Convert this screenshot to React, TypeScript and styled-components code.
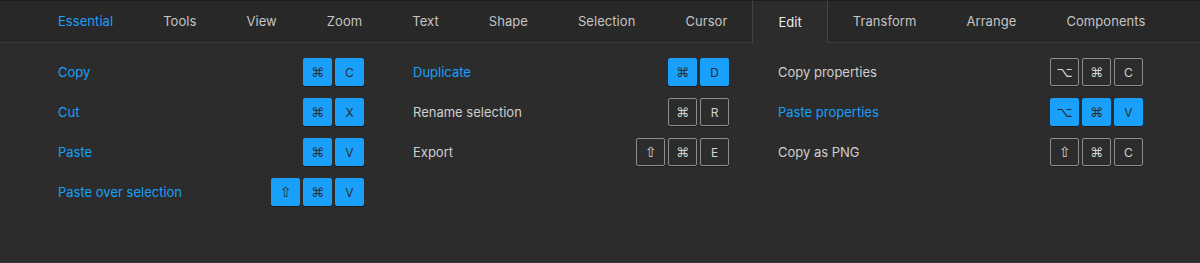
import React from "react";
import styled, { createGlobalStyle } from "styled-components";

const Global = createGlobalStyle`
  html, body { margin: 0; padding: 0; background: #2c2c2c; }
  body { font-family: Inter, "Noto Sans", sans-serif; -webkit-font-smoothing: antialiased; }
`;

const Page = styled.div`
  width: 1200px;
  height: 263px;
  box-sizing: border-box;
  background: #2c2c2c;
  border-top: 1px solid #1f1f1f;
  border-bottom: 1px solid #3a3a3a;
  display: flex;
  flex-direction: column;
`;

const TabBar = styled.div`
  height: 42px;
  box-sizing: border-box;
  display: flex;
  align-items: stretch;
  padding-left: 33px;
  background: #282828;
  border-bottom: 1px solid #3b3b3b;
`;

const Tab = styled.div<{ $active?: boolean; $first?: boolean }>`
  display: flex;
  align-items: center;
  padding: 0 ${(p) => (p.$active ? "25px" : "24px")} 1px;
  font-size: 13px;
  letter-spacing: 0.06px;
  color: ${(p) => (p.$first ? "#18a0fb" : p.$active ? "#ececec" : "#c4c4c4")};
  border-left: 1px solid ${(p) => (p.$active ? "#444" : "transparent")};
  border-right: 1px solid ${(p) => (p.$active ? "#444" : "transparent")};
  background: ${(p) => (p.$active ? "#2c2c2c" : "transparent")};
  margin-bottom: ${(p) => (p.$active ? "-1px" : "0")};
`;

const Content = styled.div`
  display: flex;
  gap: 49px;
  padding: 9px 0 0 58px;
`;

const Column = styled.div<{ $w: number }>`
  width: ${(p) => p.$w}px;
  display: flex;
  flex-direction: column;
`;

const Row = styled.div`
  height: 40px;
  display: flex;
  align-items: center;
  justify-content: space-between;
`;

const Label = styled.span<{ $blue?: boolean }>`
  font-size: 13px;
  color: ${(p) => (p.$blue ? "#18a0fb" : "#cfcfcf")};
`;

const Keys = styled.div`
  display: flex;
  gap: 3px;
`;

const Key = styled.span<{ $blue?: boolean }>`
  width: 29px;
  height: 28px;
  box-sizing: border-box;
  display: flex;
  align-items: center;
  justify-content: center;
  border-radius: 2px;
  font-size: 12px;
  font-family: Inter, "DejaVu Sans", sans-serif;
  color: ${(p) => (p.$blue ? "#2c2c2c" : "#d4d4d4")};
  background: ${(p) => (p.$blue ? "#18a0fb" : "transparent")};
  border: 1px solid ${(p) => (p.$blue ? "#18a0fb" : "#8c8c8c")};
  box-shadow: 0 1px 0 #1e1e1e;
`;

const Sym = styled.span<{ $size: number }>`
  font-family: "DejaVu Sans", sans-serif;
  font-size: ${(p) => p.$size}px;
  line-height: 1;
`;

const symSize: Record<string, number> = { "⌘": 13, "⇧": 14, "⌥": 14 };

type Item = { label: string; blue?: boolean; keys: string[] };

const cols: { w: number; items: Item[] }[] = [
  {
    w: 306,
    items: [
      { label: "Copy", blue: true, keys: ["⌘", "C"] },
      { label: "Cut", blue: true, keys: ["⌘", "X"] },
      { label: "Paste", blue: true, keys: ["⌘", "V"] },
      { label: "Paste over selection", blue: true, keys: ["⇧", "⌘", "V"] },
    ],
  },
  {
    w: 316,
    items: [
      { label: "Duplicate", blue: true, keys: ["⌘", "D"] },
      { label: "Rename selection", keys: ["⌘", "R"] },
      { label: "Export", keys: ["⇧", "⌘", "E"] },
    ],
  },
  {
    w: 365,
    items: [
      { label: "Copy properties", keys: ["⌥", "⌘", "C"] },
      { label: "Paste properties", blue: true, keys: ["⌥", "⌘", "V"] },
      { label: "Copy as PNG", keys: ["⇧", "⌘", "C"] },
    ],
  },
];

const tabs = ["Essential", "Tools", "View", "Zoom", "Text", "Shape", "Selection", "Cursor", "Edit", "Transform", "Arrange", "Components"];

export default function App() {
  return (
    <>
      <Global />
      <Page>
        <TabBar>
          {tabs.map((t, i) => (
            <Tab key={t} $first={i === 0} $active={t === "Edit"}>
              {t}
            </Tab>
          ))}
        </TabBar>
        <Content>
          {cols.map((c, ci) => (
            <Column key={ci} $w={c.w}>
              {c.items.map((it) => (
                <Row key={it.label}>
                  <Label $blue={it.blue}>{it.label}</Label>
                  <Keys>
                    {it.keys.map((k, ki) => (
                      <Key key={ki} $blue={it.blue}>
                        {/[A-Z]/.test(k) ? k : <Sym $size={symSize[k]}>{k}</Sym>}
                      </Key>
                    ))}
                  </Keys>
                </Row>
              ))}
            </Column>
          ))}
        </Content>
      </Page>
    </>
  );
}
